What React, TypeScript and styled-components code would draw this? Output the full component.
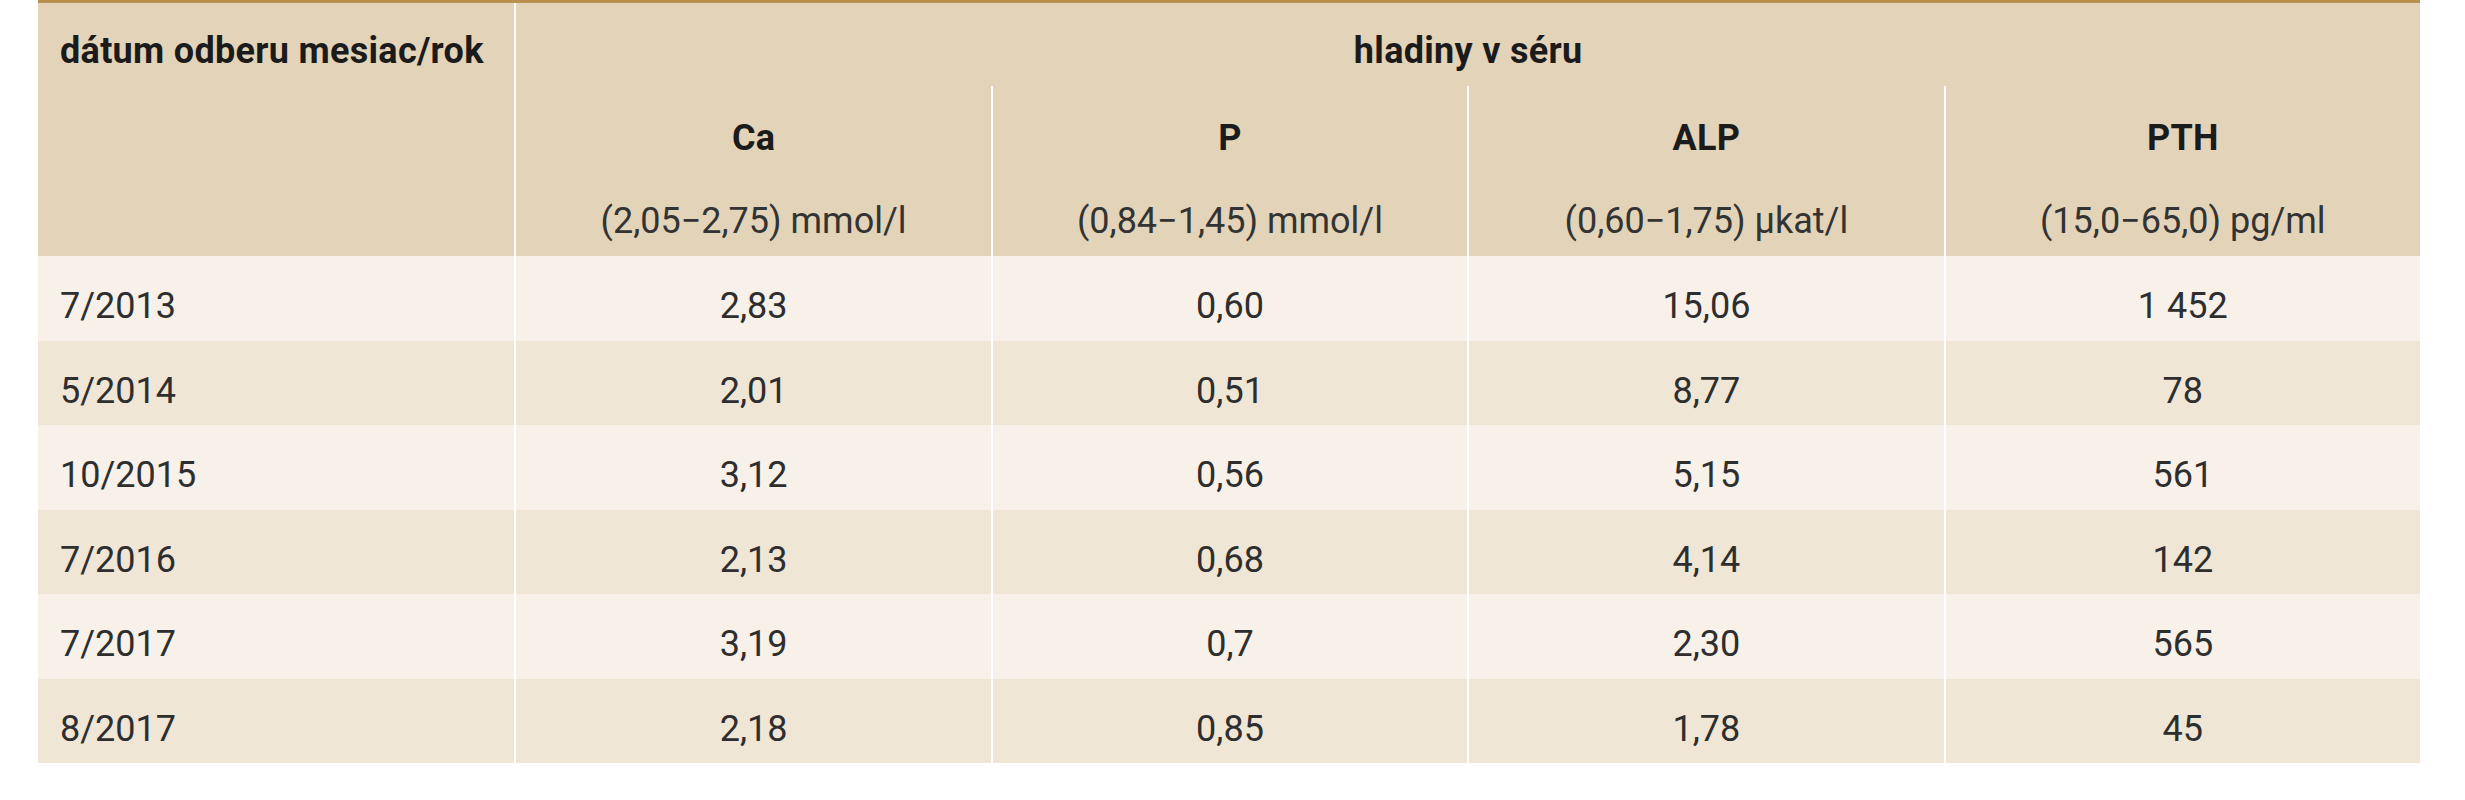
import React from "react";
import styled, { createGlobalStyle } from "styled-components";

const Global = createGlobalStyle`
  html, body { margin: 0; padding: 0; background: #ffffff; }
  body { font-family: Roboto, "Liberation Sans", sans-serif; }
`;

const Page = styled.div`
  padding-left: 38px;
  width: 2465px;
  box-sizing: border-box;
`;

const Table = styled.div`
  width: 2382px;
  border-top: 3px solid #b8904f;
  display: grid;
  grid-template-columns: repeat(5, 1fr);
  font-family: Roboto, "Liberation Sans", sans-serif;
  font-size: 36px;
  line-height: 36px;
  color: #2a2a2a;
`;

const HeadCorner = styled.div`
  grid-row: span 2;
  background: #e3d3b8;
  padding: 30px 0 0 22px;
  font-weight: 700;
  letter-spacing: 0.3px;
  color: #1b1b1b;
  white-space: nowrap;
`;

const HeadGroup = styled.div`
  grid-column: span 4;
  background: #e3d3b8;
  border-left: 2px solid #ffffff;
  height: 83px;
  box-sizing: border-box;
  padding-top: 30px;
  text-align: center;
  font-weight: 700;
  letter-spacing: 0.3px;
  color: #1b1b1b;
`;

const HeadCol = styled.div`
  background: #e3d3b8;
  border-left: 2px solid #ffffff;
  height: 170px;
  box-sizing: border-box;
  padding-top: 34px;
  display: flex;
  flex-direction: column;
  align-items: center;
  gap: 47px;
`;

const HeadLabel = styled.span`
  font-weight: 700;
  letter-spacing: 0.3px;
  color: #1b1b1b;
`;

const HeadRange = styled.span`
  font-weight: 400;
  color: #333333;
  white-space: nowrap;
`;

const Cell = styled.div<{ $alt: boolean; $first?: boolean }>`
  background: ${(p) => (p.$alt ? "#efe6d6" : "#f7f1ea")};
  height: 84.5px;
  box-sizing: border-box;
  padding-top: 32px;
  padding-left: ${(p) => (p.$first ? "22px" : "0")};
  text-align: ${(p) => (p.$first ? "left" : "center")};
  border-left: ${(p) => (p.$first ? "none" : "2px solid #ffffff")};
  color: #2e2e2e;
  white-space: nowrap;
`;

const cols = [
  { label: "Ca", range: "(2,05−2,75) mmol/l" },
  { label: "P", range: "(0,84−1,45) mmol/l" },
  { label: "ALP", range: "(0,60−1,75) µkat/l" },
  { label: "PTH", range: "(15,0−65,0) pg/ml" },
];

const rows: string[][] = [
  ["7/2013", "2,83", "0,60", "15,06", "1\u00a0452"],
  ["5/2014", "2,01", "0,51", "8,77", "78"],
  ["10/2015", "3,12", "0,56", "5,15", "561"],
  ["7/2016", "2,13", "0,68", "4,14", "142"],
  ["7/2017", "3,19", "0,7", "2,30", "565"],
  ["8/2017", "2,18", "0,85", "1,78", "45"],
];

export default function App() {
  return (
    <Page>
      <Global />
      <Table>
        <HeadCorner>dátum odberu mesiac/rok</HeadCorner>
        <HeadGroup>hladiny v séru</HeadGroup>
        {cols.map((c) => (
          <HeadCol key={c.label}>
            <HeadLabel>{c.label}</HeadLabel>
            <HeadRange>{c.range}</HeadRange>
          </HeadCol>
        ))}
        {rows.map((r, i) =>
          r.map((v, j) => (
            <Cell key={`${i}-${j}`} $alt={i % 2 === 1} $first={j === 0}>
              {v}
            </Cell>
          ))
        )}
      </Table>
    </Page>
  );
}
